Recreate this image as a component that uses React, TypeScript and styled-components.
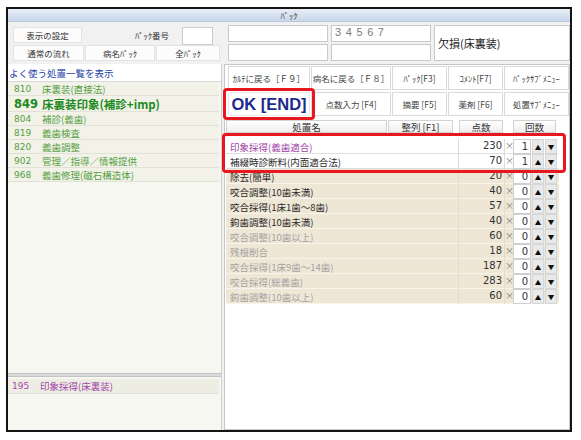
import styled, { createGlobalStyle } from 'styled-components';

const GlobalStyle = createGlobalStyle`
  html, body { margin: 0; padding: 0; background: #fff; }
  body { font-family: "Noto Sans CJK JP", "Noto Sans", sans-serif; }
  * { box-sizing: border-box; }
`;

interface TreatmentRow {
  name: string;
  points: number;
  count: number;
  tone: 'purple' | 'dark' | 'gray';
  selected?: boolean;
}

interface FavoriteItem {
  code: string;
  name: string;
  main?: boolean;
}

const favorites: FavoriteItem[] = [
  { code: '810', name: '床裏装(直接法)' },
  { code: '849', name: '床裏装印象(補診+imp)', main: true },
  { code: '804', name: '補診(義歯)' },
  { code: '819', name: '義歯検査' },
  { code: '820', name: '義歯調整' },
  { code: '902', name: '管理／指導／情報提供' },
  { code: '968', name: '義歯修理(磁石構造体)' },
];

const rows: TreatmentRow[] = [
  { name: '印象採得(義歯適合)', points: 230, count: 1, tone: 'purple', selected: true },
  { name: '補綴時診断料(内面適合法)', points: 70, count: 1, tone: 'dark', selected: true },
  { name: '除去(簡単)', points: 20, count: 0, tone: 'dark' },
  { name: '咬合調整(10歯未満)', points: 40, count: 0, tone: 'dark' },
  { name: '咬合採得(1床1歯～8歯)', points: 57, count: 0, tone: 'dark' },
  { name: '鉤歯調整(10歯未満)', points: 40, count: 0, tone: 'dark' },
  { name: '咬合調整(10歯以上)', points: 60, count: 0, tone: 'gray' },
  { name: '残根削合', points: 18, count: 0, tone: 'gray' },
  { name: '咬合採得(1床9歯～14歯)', points: 187, count: 0, tone: 'gray' },
  { name: '咬合採得(総義歯)', points: 283, count: 0, tone: 'gray' },
  { name: '鉤歯調整(10歯以上)', points: 60, count: 0, tone: 'gray' },
];

const toneColor = {
  purple: '#a23fa6',
  dark: '#2b2b2b',
  gray: '#a3a3a3',
};

const Page = styled.div`
  width: 581px;
  height: 440px;
  padding: 7px 0 0 6px;
  background: #fff;
`;

const Window = styled.div`
  width: 566px;
  height: 425px;
  border: 2px solid #151515;
  display: flex;
  flex-direction: column;
  background: #f1f1f1;
`;

const TitleBar = styled.div`
  height: 12px;
  flex: none;
  background: linear-gradient(#e8eef7, #c8d7ea);
  display: flex;
  align-items: center;
  justify-content: center;
  font-size: 8.5px;
  color: #444;
  line-height: 1;
`;

const Body = styled.div`
  flex: 1;
  display: grid;
  grid-template-columns: 214px 346px;
  grid-template-rows: 41px 1fr;
  column-gap: 2px;
  row-gap: 1px;
  border-top: 1px solid #b9c9dd;
  min-height: 0;
`;

/* top left: settings */
const SettingsBlock = styled.div`
  padding: 5px 0 0 5px;
  display: flex;
  flex-direction: column;
  gap: 2px;
`;

const SettingsRow = styled.div`
  display: flex;
  align-items: flex-start;
  gap: 1px;
  height: 16px;
`;

const FlatButton = styled.div<{ $w: number }>`
  width: ${(p) => p.$w}px;
  height: 16px;
  background: #fcfcfc;
  border: 1px solid #e3e3e3;
  font-size: 8.5px;
  color: #333;
  display: flex;
  align-items: center;
  justify-content: center;
`;

const FieldLabel = styled.div`
  width: 98px;
  height: 16px;
  font-size: 8.5px;
  color: #333;
  display: flex;
  align-items: center;
  justify-content: flex-end;
  padding-right: 12px;
`;

const NumberBox = styled.div`
  width: 31px;
  height: 18px;
  background: #fff;
  border: 1px solid #cdcdcd;
`;

/* top right: fields */
const FieldGrid = styled.div`
  display: grid;
  grid-template-columns: 100px 100px 136px;
  grid-template-rows: 17px 17px;
  gap: 2px 3px;
  padding: 3px 0 0 4px;
`;

const Field = styled.div<{ $tall?: boolean }>`
  background: #fff;
  border: 1px solid #c9c9c9;
  display: flex;
  align-items: center;
  ${(p) => (p.$tall ? 'grid-row: span 2; padding-left: 3px; font-size: 11px; color: #222;' : '')}
`;

const Digits = styled.span`
  font-family: "Liberation Sans", Arial, sans-serif;
  font-size: 11px;
  color: #7a7a7a;
  letter-spacing: 4.6px;
  padding-left: 3px;
  margin-top: -3px;
`;

/* left main */
const LeftPanel = styled.div`
  display: flex;
  flex-direction: column;
  background: #f7f7f1;
  border-right: 1px solid #cfcfcf;
  min-height: 0;
`;

const ListHeader = styled.div`
  height: 18px;
  flex: none;
  background: #fff;
  color: #2343a5;
  font-size: 9.5px;
  padding-left: 1px;
  display: flex;
  align-items: center;
  border-bottom: 1px solid #d9d9d9;
`;

const FavoriteList = styled.div`
  flex: 1;
  padding-right: 2px;
`;

const FavoriteRow = styled.div<{ $main?: boolean }>`
  height: ${(p) => (p.$main ? 16 : 14)}px;
  display: flex;
  align-items: center;
  background: #f2f2e9;
  border-bottom: 1px solid #e1e1d7;
  color: ${(p) => (p.$main ? '#1d8a21' : '#55a03f')};
  font-size: ${(p) => (p.$main ? '11.5px' : '9.5px')};
  font-weight: ${(p) => (p.$main ? 700 : 400)};
  padding-left: 6px;
  white-space: nowrap;
`;

const Code = styled.span<{ $main?: boolean }>`
  width: 28px;
  flex: none;
  font-family: "DejaVu Sans", sans-serif;
  font-size: ${(p) => (p.$main ? '11.5px' : '9px')};
`;

const Splitter = styled.div`
  height: 4px;
  flex: none;
  background: #dadada;
  border-top: 1px solid #c4c4c4;
  border-bottom: 1px solid #c4c4c4;
`;

const RecentList = styled.div`
  height: 53px;
  flex: none;
  padding: 2px 2px 0 0;
`;

const RecentRow = styled(FavoriteRow)`
  height: 15px;
  color: #a446a8;
  background: #ededE3;
  padding-left: 4px;
`;

/* right main */
const RightPanel = styled.div`
  position: relative;
  background: #fff;
  border: 1px solid #c7c7c7;
  padding: 1px 0 0 1px;
`;

const CommandGrid = styled.div`
  display: grid;
  grid-template-columns: 82px 80px 55px 55px 65px;
  grid-template-rows: 24px 24px;
  gap: 2px 1px;
  margin-left: 2px;
`;

const CommandButton = styled.div`
  background: #fff;
  border: 1px solid #dadada;
  font-size: 8.5px;
  color: #444;
  display: flex;
  align-items: center;
  justify-content: center;
  white-space: nowrap;
`;

const OkButton = styled(CommandButton)`
  font-family: "Liberation Sans", Arial, sans-serif;
  font-weight: 700;
  font-size: 16.5px;
  color: #1d2a8e;
  border-color: #e6e6e6;
`;

const HeaderRow = styled.div`
  display: flex;
  height: 13px;
  margin-top: 4px;
`;

const HeaderCell = styled.div<{ $w: number; $ml?: number }>`
  width: ${(p) => p.$w}px;
  margin-left: ${(p) => p.$ml ?? 0}px;
  background: linear-gradient(#ffffff, #eeeeee);
  border: 1px solid #d3d3d3;
  font-size: 9.5px;
  color: #333;
  display: flex;
  align-items: center;
  justify-content: center;
`;

const Table = styled.div`
  margin-top: 6px;
  width: 333px;
`;

const Row = styled.div<{ $selected?: boolean }>`
  display: grid;
  grid-template-columns: 233px 46px 8px 18px 13px 13px;
  column-gap: 0;
  height: 15px;
  background: ${(p) => (p.$selected ? '#fff' : '#efe7d6')};
  border-bottom: 1px solid ${(p) => (p.$selected ? '#dedede' : '#f8f4ec')};
`;

const NameCell = styled.div<{ $tone: TreatmentRow['tone'] }>`
  color: ${(p) => toneColor[p.$tone]};
  font-size: 9.5px;
  padding-left: 4px;
  display: flex;
  align-items: center;
  border-right: 1px solid #e2dccf;
  white-space: nowrap;
`;

const PointsCell = styled.div`
  font-family: "DejaVu Sans", sans-serif;
  font-size: 10px;
  color: #333;
  text-align: right;
  padding-right: 2px;
  line-height: 14px;
  border-right: 1px solid #e2dccf;
`;

const Times = styled.div`
  font-size: 9px;
  color: #777;
  line-height: 14px;
  text-align: center;
`;

const CountBox = styled.div`
  background: #fff;
  border: 1px solid #cfcfcf;
  font-family: "DejaVu Sans", sans-serif;
  font-size: 10px;
  color: #333;
  text-align: right;
  padding-right: 2px;
  line-height: 13px;
`;

const ArrowButton = styled.div`
  background: #e9e9e9;
  border: 1px solid #d6d6d6;
  margin-left: 1px;
  font-size: 6.5px;
  color: #111;
  display: flex;
  align-items: center;
  justify-content: center;
`;

/* red annotation marks laid over the screen */
const Mark = styled.div<{ $l: number; $t: number; $w: number; $h: number }>`
  position: absolute;
  left: ${(p) => p.$l}px;
  top: ${(p) => p.$t}px;
  width: ${(p) => p.$w}px;
  height: ${(p) => p.$h}px;
  border: 3px solid #e8161f;
  border-radius: 4px;
  pointer-events: none;
`;

export default function App() {
  return (
    <Page>
      <GlobalStyle />
      <Window>
        <TitleBar>ﾊﾟｯｸ</TitleBar>
        <Body>
          <SettingsBlock>
            <SettingsRow>
              <FlatButton $w={69}>表示の設定</FlatButton>
              <FieldLabel>ﾊﾟｯｸ番号</FieldLabel>
              <NumberBox />
            </SettingsRow>
            <SettingsRow>
              <FlatButton $w={71}>通常の流れ</FlatButton>
              <FlatButton $w={70}>病名ﾊﾟｯｸ</FlatButton>
              <FlatButton $w={64}>全ﾊﾟｯｸ</FlatButton>
            </SettingsRow>
          </SettingsBlock>

          <FieldGrid>
            <Field />
            <Field>
              <Digits>34567</Digits>
            </Field>
            <Field $tall>欠損(床裏装)</Field>
            <Field />
            <Field />
          </FieldGrid>

          <LeftPanel>
            <ListHeader>よく使う処置一覧を表示</ListHeader>
            <FavoriteList>
              {favorites.map((f) => (
                <FavoriteRow key={f.code} $main={f.main}>
                  <Code $main={f.main}>{f.code}</Code>
                  {f.name}
                </FavoriteRow>
              ))}
            </FavoriteList>
            <Splitter />
            <RecentList>
              <RecentRow>
                <Code>195</Code>
                印象採得(床裏装)
              </RecentRow>
            </RecentList>
          </LeftPanel>

          <RightPanel>
            <CommandGrid>
              <CommandButton>ｶﾙﾃに戻る［Ｆ９］</CommandButton>
              <CommandButton>病名に戻る［Ｆ８］</CommandButton>
              <CommandButton>ﾊﾟｯｸ[F3]</CommandButton>
              <CommandButton>ｺﾒﾝﾄ[F7]</CommandButton>
              <CommandButton>ﾊﾟｯｸｻﾌﾞﾒﾆｭｰ</CommandButton>
              <OkButton>OK [END]</OkButton>
              <CommandButton>点数入力 [F4]</CommandButton>
              <CommandButton>摘要 [F5]</CommandButton>
              <CommandButton>薬剤 [F6]</CommandButton>
              <CommandButton>処置ｻﾌﾞﾒﾆｭｰ</CommandButton>
            </CommandGrid>

            <HeaderRow>
              <HeaderCell $w={161}>処置名</HeaderCell>
              <HeaderCell $w={65} $ml={1}>整列 [F1]</HeaderCell>
              <HeaderCell $w={44} $ml={6}>点数</HeaderCell>
              <HeaderCell $w={43} $ml={10}>回数</HeaderCell>
            </HeaderRow>

            <Table>
              {rows.map((r) => (
                <Row key={r.name} $selected={r.selected}>
                  <NameCell $tone={r.tone}>{r.name}</NameCell>
                  <PointsCell>{r.points}</PointsCell>
                  <Times>×</Times>
                  <CountBox>{r.count}</CountBox>
                  <ArrowButton>▲</ArrowButton>
                  <ArrowButton>▼</ArrowButton>
                </Row>
              ))}
            </Table>

            <Mark $l={-2} $t={23} $w={92} $h={32} />
            <Mark $l={-3} $t={68} $w={344} $h={40} />
          </RightPanel>
        </Body>
      </Window>
    </Page>
  );
}
